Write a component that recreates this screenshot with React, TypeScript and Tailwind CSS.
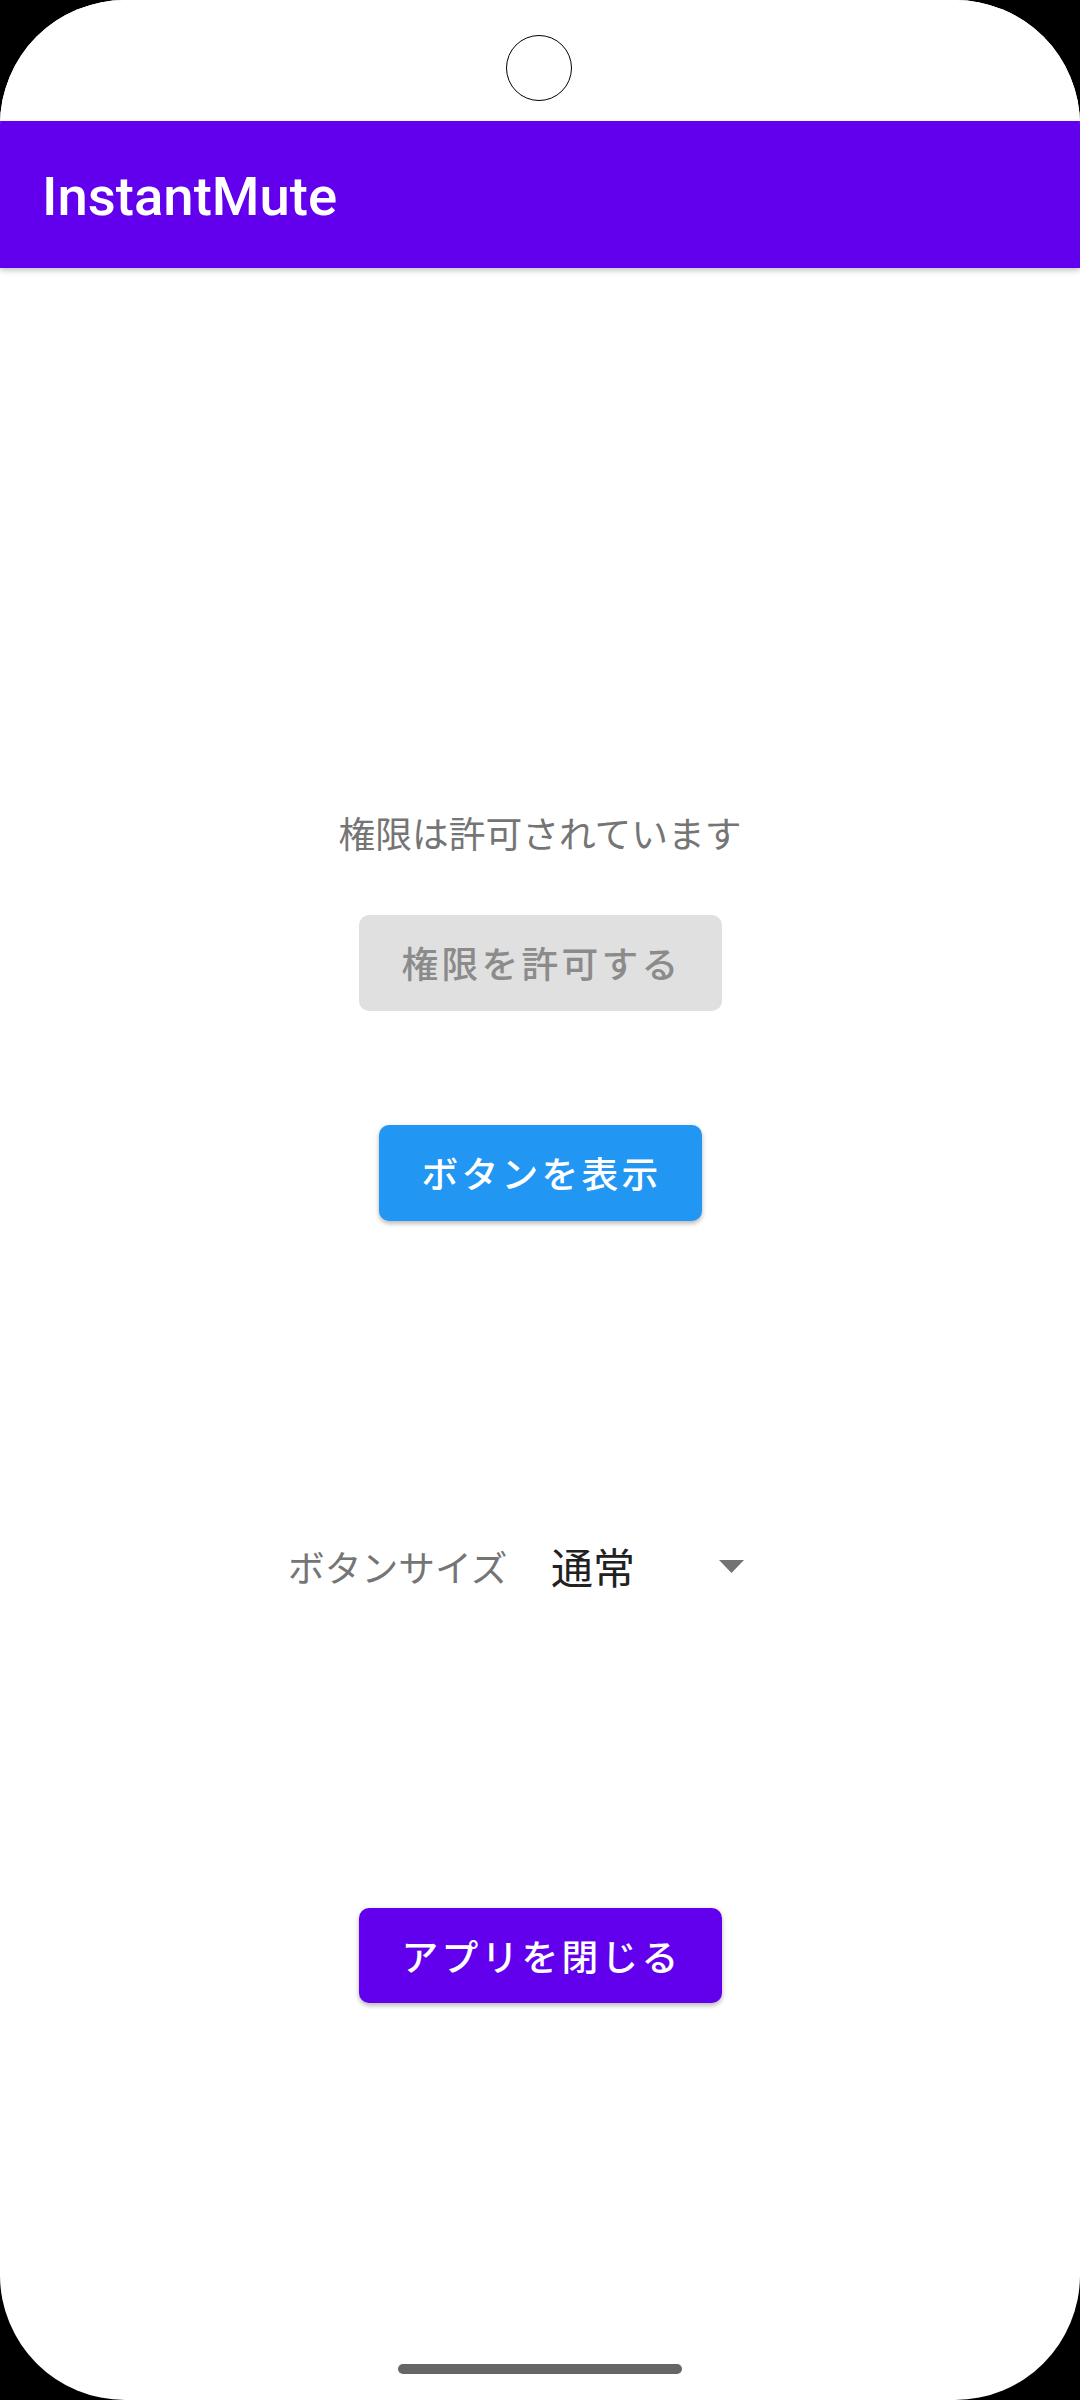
import React from "react";

const jp = { fontFamily: '"Noto Sans CJK JP", "Noto Sans", sans-serif' };

export default function App() {
  return (
    <div className="w-[1080px] h-[2400px] bg-black">
      <div className="relative w-[1080px] h-[2400px] bg-white rounded-[125px] overflow-hidden flex flex-col">
        {/* status bar area */}
        <div className="relative h-[121px] shrink-0 bg-white">
          <div className="absolute left-[506px] top-[35px] w-[66px] h-[66px] rounded-full border-[1.5px] border-black bg-white" />
        </div>
        {/* app bar */}
        <div className="relative z-10 h-[147px] shrink-0 bg-[#6200EE] flex items-center pl-[42px] shadow-[0_3px_6px_rgba(0,0,0,0.16),0_2px_3px_rgba(0,0,0,0.08)]">
          <span
            className="text-white text-[54.5px] font-medium leading-none pt-[4px]"
            style={{ fontFamily: 'Roboto, "Liberation Sans", sans-serif' }}
          >
            InstantMute
          </span>
        </div>
        {/* content */}
        <div className="flex flex-col items-center" style={jp}>
          <div className="mt-[539px] h-[50px] leading-[50px] text-[36.75px] text-[#757575]">
            権限は許可されています
          </div>
          <div className="mt-[58px] h-[96px] w-[363px] rounded-[10px] bg-[#e0e0e0] flex items-center justify-center text-[36.75px] font-medium tracking-[3.28px] text-[#8b8b8b] pl-[3px]">
            権限を許可する
          </div>
          <div className="mt-[114px] h-[96px] w-[323px] rounded-[10px] bg-[#2196F3] flex items-center justify-center text-[36.75px] font-medium tracking-[3.28px] text-white pl-[3px] shadow-[0_3px_4px_rgba(0,0,0,0.2),0_1px_6px_rgba(0,0,0,0.1)]">
            ボタンを表示
          </div>
          <div className="mt-[315px] h-[60px] flex items-center justify-center">
            <div className="w-[221px] text-[36.75px] text-[#757575] leading-[60px] whitespace-nowrap">
              ボタンサイズ
            </div>
            <div className="w-[283px] flex items-center pl-[42px]">
              <span className="text-[42px] text-[#212121] leading-[60px]">通常</span>
              <svg
                className="ml-[84px]"
                width="25"
                height="13"
                viewBox="0 0 25 13"
              >
                <path d="M0 0 L25 0 L12.5 13 Z" fill="#737373" />
              </svg>
            </div>
          </div>
          <div className="mt-[312px] h-[95px] w-[363px] rounded-[10px] bg-[#6200EE] flex items-center justify-center text-[36.75px] font-medium tracking-[3.28px] text-white pl-[3px] shadow-[0_3px_4px_rgba(0,0,0,0.2),0_1px_6px_rgba(0,0,0,0.1)]">
            アプリを閉じる
          </div>
        </div>
        <div className="flex-1" />
        <div className="shrink-0 flex justify-center pb-[26px]">
          <div className="w-[284px] h-[10px] rounded-full bg-[#666666]" />
        </div>
      </div>
    </div>
  );
}
